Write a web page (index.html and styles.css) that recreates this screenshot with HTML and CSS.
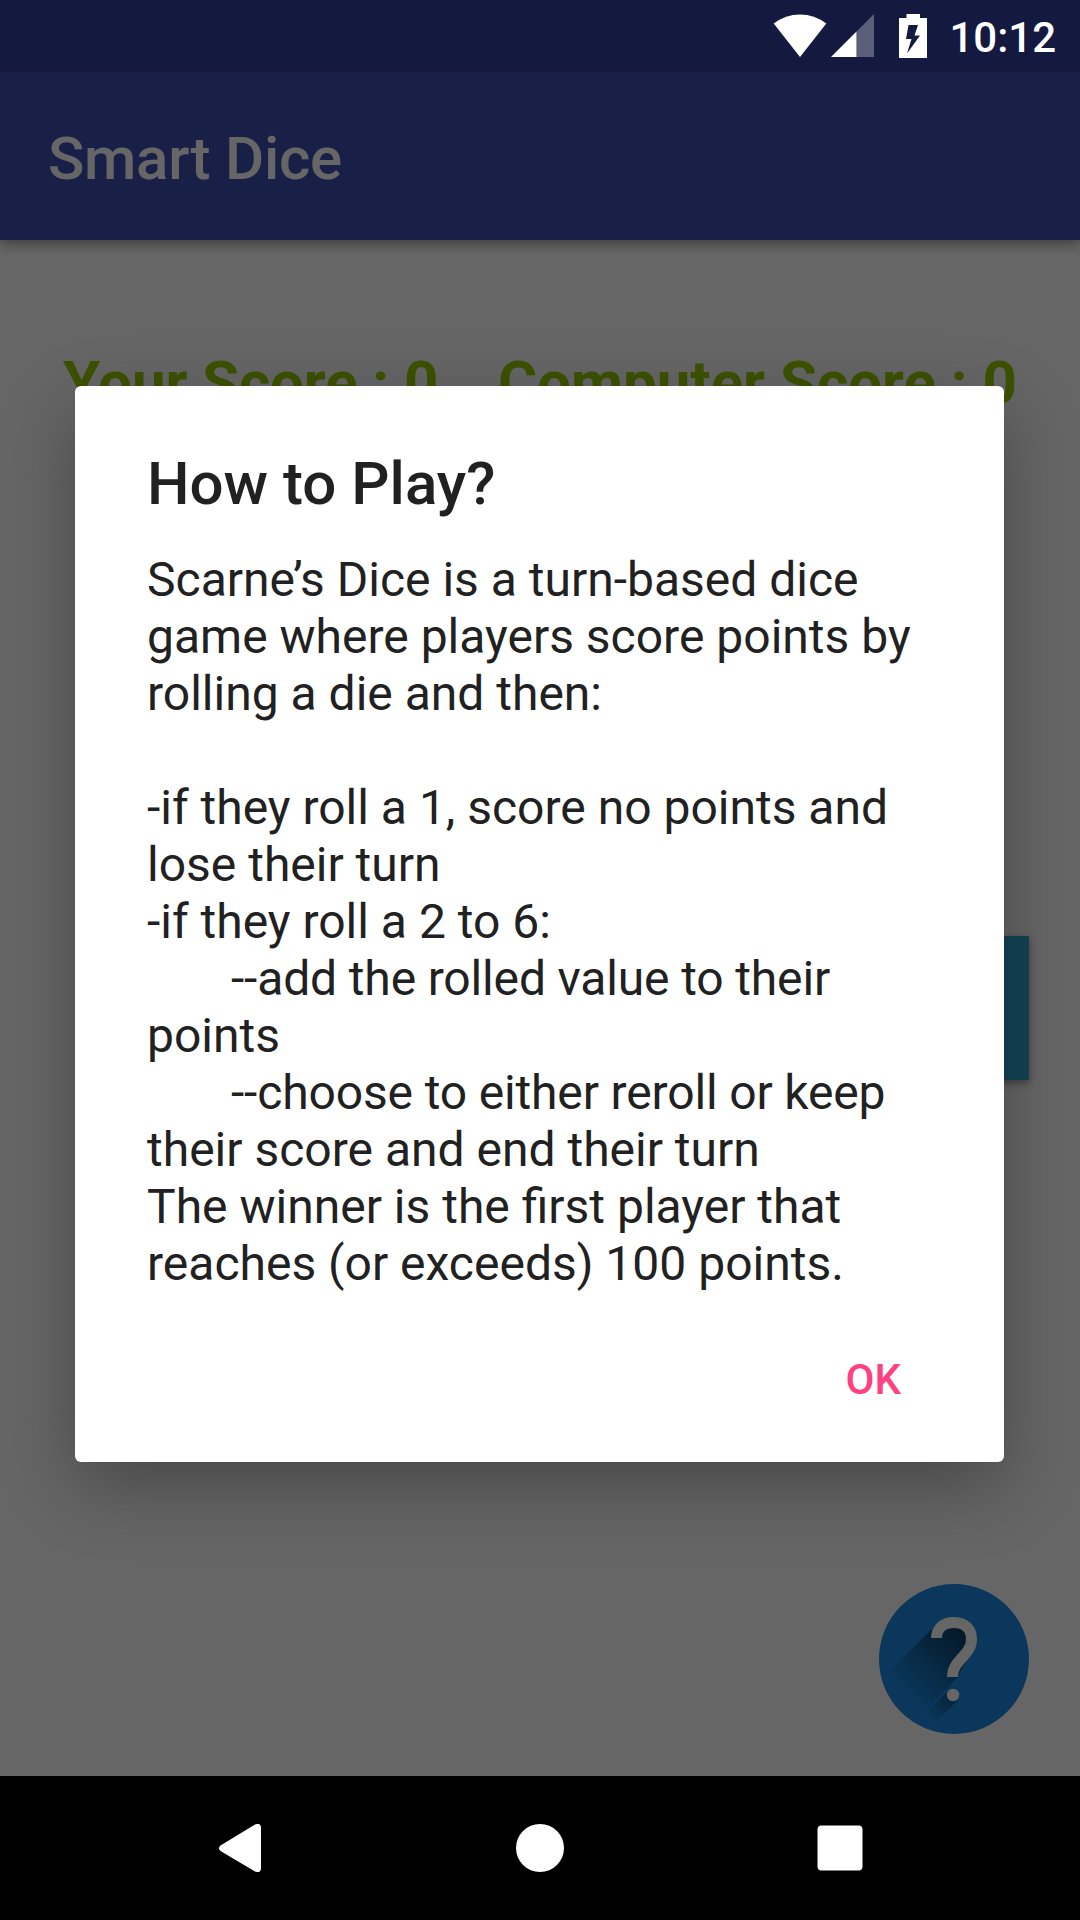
FILE: index.html
```html
<!DOCTYPE html>
<html lang="en">
<head>
<meta charset="utf-8">
<title>Smart Dice</title>
<link rel="stylesheet" href="styles.css">
</head>
<body>
<div class="screen">
  <header class="status-bar">
    <div class="status-items">
      <svg class="wifi" width="54" height="44" viewBox="0 0 54 44"><path fill="#fff" d="M27 43 L.7 9.5 Q12.500 .4 27 .4 Q41.500 .4 53.300 9.500 Z"/></svg>
      <svg class="signal" width="43" height="43" viewBox="0 0 43 43"><path fill="#fff" fill-opacity=".3" d="M43 0V43H25.500V17.500Z"/><path fill="#fff" d="M0 43L25.500 17.500V43Z"/></svg>
      <svg class="battery" width="28" height="44" viewBox="0 0 28 44"><path fill="#fff" fill-rule="evenodd" d="M7.500 0H21V4H28V44H0V4H7.500Z M9.500 11L7 25H12.500L8 39.500L21 21.500H15.500L19 11Z"/></svg>
      <span class="clock">10:12</span>
    </div>
  </header>
  <div class="app-bar"><h1 class="app-title">Smart Dice</h1></div>
  <main class="game">
    <div class="scores"><span class="player">Your Score : 0</span><span>Computer Score : 0</span></div>
    <div class="action-button"></div>
    <svg class="help" width="150" height="150" viewBox="0 0 150 150">
      <defs>
        <linearGradient id="cast" gradientUnits="userSpaceOnUse" x1="80" y1="52" x2="24" y2="108"><stop offset="0" stop-color="#000" stop-opacity=".52"/><stop offset="1" stop-color="#000" stop-opacity="0"/></linearGradient>
        <linearGradient id="dot-cast" gradientUnits="userSpaceOnUse" x1="76" y1="110" x2="50" y2="136"><stop offset="0" stop-color="#000" stop-opacity=".4"/><stop offset="1" stop-color="#000" stop-opacity="0"/></linearGradient>
      </defs>
      <circle cx="75" cy="75" r="75" fill="#1a8be3"/>
      <path fill="url(#cast)" d="M56 42L8 90L43 130L79 93L94 62L84 37Z"/>
      <path fill="url(#dot-cast)" d="M70 106L43 133L52 143L79 116Z"/>
      <path d="M57.500 54C57.500 44 65 38.500 75 38.500C86 38.500 92.500 45 92.500 55C92.500 72 73.500 75 73.500 93" fill="none" stroke="#fff" stroke-width="11"/>
      <circle cx="74" cy="111" r="6.200" fill="#fff"/>
    </svg>
  </main>
  <div class="scrim">
    <section class="dialog">
      <h2 class="dialog-title">How to Play?</h2>
      <div class="dialog-text">Scarne’s Dice is a turn-based dice
game where players score points by
rolling a die and then:

-if they roll a 1, score no points and
lose their turn
-if they roll a 2 to 6:
<span class="indent">--add the rolled value to their</span>
points
<span class="indent">--choose to either reroll or keep</span>
their score and end their turn
The winner is the first player that
reaches (or exceeds) 100 points.</div>
      <button class="ok">OK</button>
    </section>
  </div>
  <nav class="nav-bar">
    <svg width="48" height="48" viewBox="0 0 48 48"><path fill="#fff" d="M4.500 21.500Q1.500 24 4.500 27L39 47.500Q44.500 49.500 45 45V3Q44.500 -1.500 39 .5Z"/></svg>
    <svg width="48" height="48" viewBox="0 0 48 48"><circle cx="24" cy="24" r="24" fill="#fff"/></svg>
    <svg width="48" height="48" viewBox="0 0 48 48"><rect x="1.500" y="1.500" width="45" height="45" rx="4" fill="#fff"/></svg>
  </nav>
</div>
</body>
</html>
```
FILE: styles.css
```css
* { box-sizing: border-box; }
body { margin: 0; font-family: Roboto, "Liberation Sans", sans-serif; }
h1, h2 { margin: 0; font-weight: 500; }
svg { display: block; flex: none; }

.screen {
  position: relative;
  display: grid;
  grid-template-rows: 72px 168px 1fr 144px;
  width: 1080px;
  height: 1920px;
  overflow: hidden;
  background: #fff;
}

.status-bar {
  background: #303f9f;
}
.status-items {
  position: relative;
  z-index: 3;
  display: flex;
  justify-content: flex-end;
  align-items: flex-start;
  padding: 14px 24px 0 0;
}
.signal { margin-left: 4px; }
.battery { margin-left: 25px; }
.clock {
  margin: 3px 0 0 22px;
  font-size: 42px;
  line-height: 42px;
  font-weight: 500;
  color: #fff;
}

.app-bar {
  display: flex;
  align-items: center;
  padding: 4px 48px 0;
  background: #3f51b5;
  box-shadow: 0 4px 12px rgba(0, 0, 0, .4);
  clip-path: inset(0 0 -24px 0);
}
.app-title { font-size: 60px; letter-spacing: -.25px; color: #fff; }

.game {
  display: flex;
  flex-direction: column;
  align-items: flex-end;
  padding: 108px 51px 0 63px;
}
.scores {
  display: flex;
  justify-content: space-between;
  width: 954px;
  margin-right: 12px;
  font-size: 60px;
  line-height: 70px;
  font-weight: 700;
  color: #9c0;
  white-space: nowrap;
}
.player { letter-spacing: -.1px; }
.action-button {
  width: 240px;
  height: 144px;
  margin-top: 518px;
  background: #33a8d8;
  box-shadow: 0 3px 8px rgba(0, 0, 0, .4);
}
.help { margin-top: 504px; }

.scrim {
  position: absolute;
  inset: 0;
  z-index: 2;
  padding: 386px 76px 0 75px;
  background: rgba(0, 0, 0, .6);
}
.dialog {
  display: flex;
  flex-direction: column;
  height: 1076px;
  padding: 63px 72px 0;
  border-radius: 6px;
  background: #fff;
  color: #212121;
  box-shadow: 0 24px 72px rgba(0, 0, 0, .3);
}
.dialog-title { font-size: 60px; line-height: 70px; }
.dialog-text {
  margin-top: 32px;
  font-size: 48px;
  line-height: 57px;
  white-space: pre;
}
.indent { padding-left: 84px; letter-spacing: -.15px; }
.ok {
  align-self: flex-end;
  margin: 46px 31px 0 0;
  padding: 0;
  border: 0;
  background: none;
  font: 500 42px/84px Roboto, sans-serif;
  color: #ff4081;
}

.nav-bar {
  position: relative;
  z-index: 3;
  display: flex;
  justify-content: center;
  align-items: center;
  gap: 252px;
  background: #000;
}
```
